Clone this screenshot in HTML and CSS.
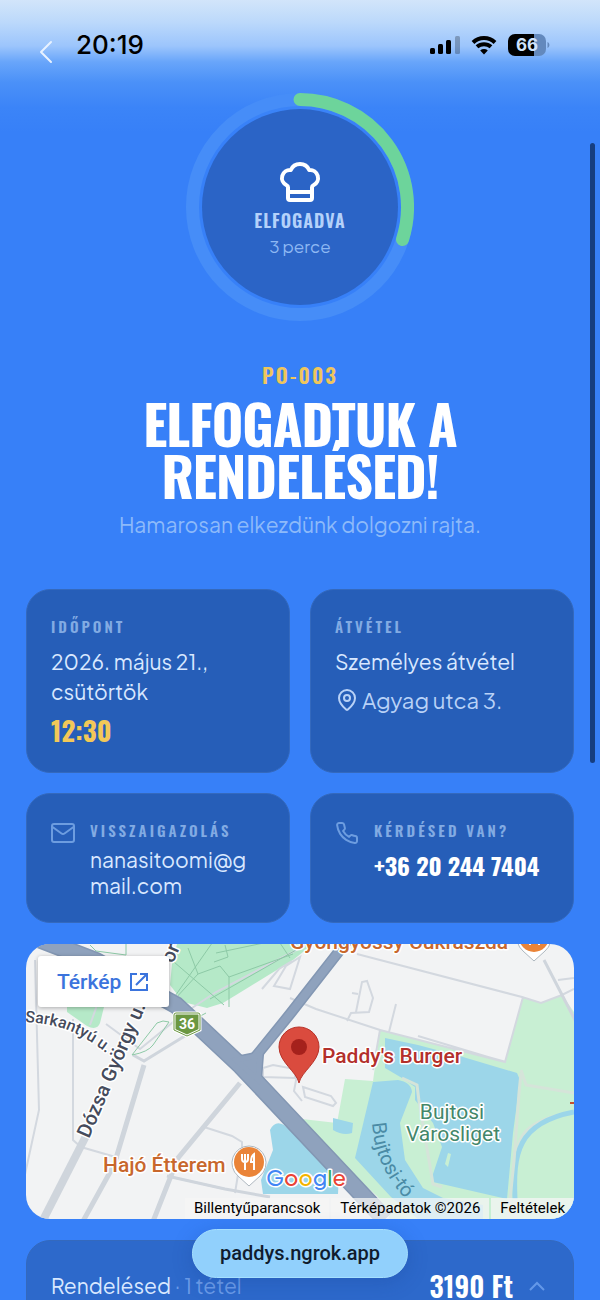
FILE: index.html
```html
<!DOCTYPE html>
<html lang="hu">
<head>
    <meta charset="UTF-8">
    <title>Paddy's Burger – PO-003</title>
    <meta name="viewport" content="width=device-width, initial-scale=1">
    <link rel="stylesheet" href="styles.css">
</head>
<body>
    <header class="status-bar">
        <button class="back" type="button" aria-label="Vissza">
            <svg width="14" height="24" viewBox="0 0 14 24"><path d="M12 2 2 12l10 10"/></svg>
        </button>
        <span class="clock">20:19</span>
        <div class="status-icons">
            <svg width="30" height="20" viewBox="0 0 30 20">
                <rect x="0" y="13" width="5" height="6" rx="1.5"/>
                <rect x="8" y="9" width="5" height="10" rx="1.5"/>
                <rect x="16" y="5" width="5" height="14" rx="1.5"/>
                <rect x="25" y="1" width="5" height="18" rx="1.5" opacity=".25"/>
            </svg>
            <svg class="wifi" width="26" height="20" viewBox="0 0 26 20">
                <path d="M2 7.5a16 16 0 0 1 22 0M6 11.8a10.5 10.5 0 0 1 14 0"/>
                <path class="dot" d="M13 19.5 9.2 15.6a5.6 5.6 0 0 1 7.6 0z"/>
            </svg>
            <svg width="42" height="22" viewBox="0 0 42 22">
                <path d="M26 0v22H7a7 7 0 0 1-7-7V7a7 7 0 0 1 7-7z"/>
                <path d="M26 0h5a7 7 0 0 1 7 7v8a7 7 0 0 1-7 7h-5z" fill="#6389bd"/>
                <path d="M39.500 8c2.500.8 2.500 5.200 0 6z" fill="#6389bd"/>
                <text class="battery-text" x="19" y="17" text-anchor="middle">66</text>
            </svg>
        </div>
    </header>

    <main class="page">
        <section class="progress">
            <svg class="ring" viewBox="0 0 228 228">
                <circle class="disc" cx="114" cy="114" r="98"/>
                <circle class="track" cx="114" cy="114" r="107.500"/>
                <path class="bar" d="M114 6.500A107.500 107.500 0 0 1 216.500 146.500"/>
            </svg>
            <div class="progress-text">
                <svg class="hat" width="48" height="48" viewBox="0 0 24 24">
                    <path d="M17 21a1 1 0 0 0 1-1v-5.350c0-.457.316-.844.727-1.041a4 4 0 0 0-2.134-7.589 5 5 0 0 0-9.186 0 4 4 0 0 0-2.134 7.588c.411.198.727.585.727 1.041V20a1 1 0 0 0 1 1ZM6 17h12"/>
                </svg>
                <strong>ELFOGADVA</strong>
                <span>3 perce</span>
            </div>
        </section>

        <section class="intro">
            <p class="order-no">PO-003</p>
            <h1>ELFOGADTUK A RENDELÉSED!</h1>
            <p class="lead">Hamarosan elkezdünk dolgozni rajta.</p>
        </section>

        <section class="cards">
            <div class="card">
                <h2>IDŐPONT</h2>
                <p>2026. május 21., csütörtök</p>
                <p class="time">12:30</p>
            </div>
            <div class="card">
                <h2>ÁTVÉTEL</h2>
                <p>Személyes átvétel</p>
                <p class="address">
                    <svg width="24" height="24" viewBox="0 0 24 24">
                        <path d="M20 10c0 5-5.500 10.200-7.400 11.800a1 1 0 0 1-1.200 0C9.500 20.200 4 15 4 10a8 8 0 0 1 16 0"/>
                        <circle cx="12" cy="10" r="3"/>
                    </svg>
                    Agyag utca 3.
                </p>
            </div>
            <div class="card with-icon">
                <svg width="24" height="24" viewBox="0 0 24 24">
                    <rect x="1" y="3" width="22" height="18" rx="2"/>
                    <path d="m1.500 6 9 6.500a2.600 2.600 0 0 0 3 0l9-6.500"/>
                </svg>
                <div>
                    <h2>VISSZAIGAZOLÁS</h2>
                    <p class="email">nanasitoomi@gmail.com</p>
                </div>
            </div>
            <div class="card with-icon">
                <svg width="24" height="24" viewBox="0 0 24 24">
                    <path d="M22 16.920v3a2 2 0 0 1-2.180 2 19.790 19.790 0 0 1-8.630-3.070 19.500 19.500 0 0 1-6-6 19.790 19.790 0 0 1-3.070-8.670A2 2 0 0 1 4.110 2h3a2 2 0 0 1 2 1.720 12.840 12.840 0 0 0 .7 2.810 2 2 0 0 1-.45 2.110L8.090 9.910a16 16 0 0 0 6 6l1.270-1.270a2 2 0 0 1 2.110-.45 12.840 12.840 0 0 0 2.810.7A2 2 0 0 1 22 16.920z"/>
                </svg>
                <div>
                    <h2>KÉRDÉSED VAN?</h2>
                    <a class="phone" href="tel:+36202447404">+36 20 244 7404</a>
                </div>
            </div>
        </section>

        <section class="map">
            <svg class="map-canvas" viewBox="0 0 548 275" preserveAspectRatio="xMidYMid slice">
                <rect width="548" height="275" fill="#f2f3f4"/>

                <!-- parks -->
                <g fill="#b5e9c8">
                    <path d="M151 0 146 20l-2 21 13 17 24 6 16-5 70-43 20-16z"/>
                    <path d="M41 55v13l20 14q10 5 13-3l4-16v-8z"/>
                </g>
                <path d="m354 86 125 32 18-65 19 6 20-8 12 17v207H364l-12-22-76-70v-8l35 4 8-44 28 2z" fill="#c8efd3"/>

                <!-- water -->
                <g fill="#9cd6e9">
                    <path d="m359 94 33 7 45 12 54 16q4 7 2 15l-6 45-6 66-74-17-1-5 10-30-9-24-18-23v-13l-13-9-17-10z"/>
                    <path d="m347 138 25-2q13 2 14 12l-12 31 5 37 18 28 20 10 40 7v14h-65l-27-22-36-39z"/>
                    <path d="m307 174 20 5-1 10q-9 3-19-3z"/>
                    <path d="M244 186q5-10 14-5l55 48-1 21h-75l-2-14 12-30z"/>
                </g>
                <path d="m376 134 15 7 2 16 14 83 9 3M489 275v-45c0-38 8-54 59-62" fill="none" stroke="#d5e4d9" stroke-width="3"/>
                <path d="M489 255c-2-45 2-76 59-87" fill="none" stroke="#9cd6e9" stroke-width="5"/>
                <path d="m495 129-2 20-5 68-6 58M495 126l5 15 48 8" fill="none" stroke="#d5e4d9" stroke-width="3"/>
                <path d="m422 209-3 11 3 3 3-13z" fill="#c8efd3"/>

                <!-- minor streets -->
                <g fill="none" stroke="#d3d8df" stroke-width="2">
                    <path d="M9 16 13 166-2 235M47 75v121l8 7 38 11M64 81l6-17 1-12M80 80l34 25 43-35 33-22 90-47"/>
                    <path d="M178 183l28 9 10 6v8l-7 43M141 232l58 13"/>
                    <path d="m331 10 165 43 19 6 21-8 12-6M264 54l26 11 64 21-7 40M370 60l-7 28M321 77l4-8 18-1 4-14-6-17-5 1-6 30M326 49l6 1M480 118l-18-5-70-21M354 86l125 32 18-65M532 36l16-2"/>
                    <path d="m272 126-4 21 8 10M277 143l28 9 5 7-3 3-28-9zM247 121l22 4v9l-32-1v-9zM236 45l17-20 13-8M248 42l12-20 14-9-10 32z"/>
                </g>
                <g fill="none" stroke="#cfd5dc">
                    <path d="M61 190 15 280" stroke-width="8"/>
                    <path d="m118 121-30 100-32 58M214 139l-62 75-26 66" stroke-width="5"/>
                    <path d="M107 111l11 6 62-38M141 232l58 13 45 8M518 16l32 62" stroke-width="3"/>
                </g>
                <g fill="none" stroke="#8dc9a6">
                    <path d="m64 1 6 6 30 4V0M148 18l50 43M147 55l44-63M184 55l86-49M162 4l10 26 22-8 9 11v30M172 30l-24 26M190 9l62-13 12 18M106 111l25-32 6-2 6 1-16 23q-5 7-21 10M180 69l-15 8"/>
                    <path d="m199 1 3 12-14 5M203 33l64-23"/>
                </g>

                <!-- main roads -->
                <g fill="none" stroke="#8397b3">
                    <path d="m5-8 65 25 80 44 65 61 144 153" stroke-width="18"/>
                    <path d="m325-8-61 78-43 53" stroke-width="11"/>
                    <path d="m210 116 24-5-2 25z" fill="#8397b3" stroke-width="8"/>
                </g>
                <g fill="none" stroke="#8fa2bd">
                    <path d="m5-8 65 25 80 44 65 61 144 153" stroke-width="15"/>
                    <path d="m325-8-61 78-43 53" stroke-width="8"/>
                    <path d="m210 116 24-5-2 25z" fill="#8fa2bd" stroke-width="5"/>
                </g>

                <!-- road shield -->
                <path d="M150 69h22q2 0 2 2v15l-13 6-13-6V71q0-2 2-2z" fill="#6b9741" stroke="#fff" stroke-width="3"/>
                <path d="M150 69h22q2 0 2 2v15l-13 6-13-6V71q0-2 2-2z" fill="none" stroke="#6b9741"/>
                <text class="shield" x="161" y="85" text-anchor="middle">36</text>

                <!-- street and place names -->
                <defs>
                    <path id="street-a" d="M-1 78C28 80 52 84 90 117"/>
                    <path id="street-b" d="M63 195 150-8"/>
                    <path id="street-c" d="M346 179C348 205 355 232 390 266"/>
                </defs>
                <text class="street"><textPath href="#street-a">Sarkantyú u.</textPath></text>
                <text class="street big"><textPath href="#street-b">Dózsa György u.</textPath></text>
                <text class="street big" transform="translate(147 20)rotate(-67)">or</text>
                <text class="water"><textPath href="#street-c">Bujtosi-tó</textPath></text>
                <text class="place park" x="426" y="175" text-anchor="middle">Bujtosi</text>
                <text class="place park" x="427" y="197" text-anchor="middle">Városliget</text>
                <text class="place food" x="264" y="5">Gyöngyössy Cukrászda</text>
                <text class="place food" x="77" y="228">Hajó Étterem</text>
                <text class="place main" x="296" y="119">Paddy's Burger</text>
                <path d="M544 159h5" stroke="#c5502f" stroke-width="2"/>

                <!-- restaurant pins -->
                <g id="pin-food">
                    <path d="M223 202a17 17 0 0 0-11 30l11 10 11-10a17 17 0 0 0-11-30z" fill="#fff" stroke="#aeb7bf" stroke-width="1"/>
                    <circle cx="223" cy="218" r="15" fill="#ea8438"/>
                    <path d="M216 210v5q0 3 3 3t3-3v-5M219 210v16M228 226v-16q-3 2-3 8h3" fill="none" stroke="#fff" stroke-width="2"/>
                </g>
                <use href="#pin-food" x="285" y="-225"/>
                <path d="M273 139c-2-11-20-21-20-36a20 20 0 0 1 40 0c0 15-18 25-20 36z" fill="#da4b3e" stroke="#b83228"/>
                <circle cx="273" cy="103" r="8" fill="#a5211c"/>

                <text class="google" x="240" y="242"><tspan fill="#4285f4">G</tspan><tspan fill="#ea4335">o</tspan><tspan fill="#f4b400">o</tspan><tspan fill="#4285f4">g</tspan><tspan fill="#34a853">l</tspan><tspan fill="#ea4335">e</tspan></text>
            </svg>
            <a class="map-open" href="#terkep">
                Térkép
                <svg width="20" height="20" viewBox="0 0 20 20"><path d="M8 2H2v16h16v-6M11 2h7v7M18 2 7 13"/></svg>
            </a>
            <div class="map-credits">
                <button type="button">Billentyűparancsok</button>
                <span>Térképadatok ©2026</span>
                <a href="#feltetelek">Feltételek</a>
            </div>
        </section>

        <section class="card order">
            <p>Rendelésed <span>· 1 tétel</span></p>
            <strong>3190 Ft</strong>
            <button type="button" aria-label="Részletek">
                <svg width="16" height="10" viewBox="0 0 16 10"><path d="m1 9 7-7 7 7"/></svg>
            </button>
        </section>
    </main>

    <div class="scroll-thumb"></div>
    <a class="url-pill" href="#top">paddys.ngrok.app</a>
</body>
</html>
```

FILE: styles.css
```css
* {
    box-sizing: border-box;
}
body {
    margin: 0;
    height: 100vh;
    overflow: hidden;
    position: relative;
    font-family: "Plus Jakarta Sans", Inter, "Noto Sans", sans-serif;
    color: #d9e8ff;
    background: linear-gradient(#d2e5fa 0, #bcd9fb 22px, #9cc5fc 46px, #68a5fa 62px, #4b91f8 82px, #3b84f8 108px, #3780f8 132px);
}
h1, h2, p {
    margin: 0;
}
svg {
    display: block;
    flex: none;
}
button {
    background: none;
    border: none;
    padding: 0;
    font: inherit;
    color: inherit;
    cursor: pointer;
}
a {
    color: inherit;
    text-decoration: none;
}
h1, h2, .progress-text strong, .order-no, .time, .phone, .order strong {
    font-family: Oswald, "Liberation Sans Narrow", "Liberation Sans", sans-serif;
}

/* status bar */
.status-bar {
    display: flex;
    align-items: center;
    height: 89px;
    padding: 0 50px 0 39px;
    font-family: Inter, sans-serif;
}
.back {
    margin-top: 14px;
}
.back path {
    fill: none;
    stroke: #e8f2ff;
    stroke-width: 2;
    stroke-linecap: round;
    stroke-linejoin: round;
}
.clock {
    margin-left: 23px;
    font-size: 26px;
    font-weight: 500;
    color: #000;
}
.status-icons {
    display: flex;
    align-items: center;
    gap: 11px;
    margin-left: auto;
}
.wifi path {
    fill: none;
    stroke: #000;
    stroke-width: 4;
}
.wifi .dot {
    fill: #000;
    stroke: none;
}
.battery-text {
    font-size: 17px;
    font-weight: 700;
    fill: #cfe3fc;
}

.page {
    padding: 4px 26px 0;
}

/* progress ring */
.progress {
    display: grid;
    justify-content: center;
    align-items: center;
}
.ring, .progress-text {
    grid-area: 1 / 1;
}
.ring {
    width: 228px;
}
.disc {
    fill: #2b64c6;
}
.track, .bar {
    fill: none;
    stroke: #468df8;
    stroke-width: 13;
}
.bar {
    stroke: #6dd49b;
    stroke-linecap: round;
}
.progress-text {
    display: flex;
    flex-direction: column;
    align-items: center;
    padding-top: 2px;
}
.hat path {
    fill: none;
    stroke: #fff;
    stroke-width: 2;
    stroke-linecap: round;
    stroke-linejoin: round;
}
.progress-text strong {
    font-size: 18px;
    font-weight: 600;
    line-height: 28px;
    letter-spacing: 1px;
    color: #b4d1fa;
}
.progress-text span {
    font-size: 17px;
    line-height: 24px;
    color: #8eb8f3;
}

/* heading */
.intro {
    padding: 37px 0 44px;
    text-align: center;
}
.order-no {
    font-size: 21px;
    font-weight: 600;
    line-height: 34px;
    letter-spacing: 2px;
    color: #efc65c;
}
h1 {
    max-width: 340px;
    margin: 5px auto 0;
    font-size: 54px;
    line-height: 52px;
    letter-spacing: -1px;
    color: #fff;
}
.lead {
    padding-top: 4px;
    font-size: 21px;
    line-height: 40px;
    color: #8dbafa;
}

/* info cards */
.cards {
    display: grid;
    grid-template-columns: 1fr 1fr;
    gap: 20px;
}
.card {
    min-width: 0;
    padding: 23px 24px;
    font-size: 21px;
    line-height: 30px;
    background: #265eb8;
    border: 1px solid #3469bd;
    border-radius: 24px;
}
.card h2 {
    margin-bottom: 8px;
    font-size: 15px;
    font-weight: 600;
    line-height: 26px;
    letter-spacing: 3px;
    white-space: nowrap;
    color: #82abe3;
}
.card .time {
    padding-top: 4px;
    font-size: 27px;
    font-weight: 700;
    line-height: 38px;
    color: #f2c858;
}
.address {
    display: flex;
    align-items: center;
    gap: 3px;
    padding-top: 8px;
    font-size: 22px;
    white-space: nowrap;
    color: #b9d2f7;
}
.address path, .address circle, .with-icon path, .with-icon rect {
    fill: none;
    stroke: currentColor;
    stroke-width: 2;
    stroke-linejoin: round;
}
.with-icon {
    display: flex;
    gap: 15px;
}
.with-icon > svg {
    margin-top: 4px;
    color: #6d9de0;
}
.with-icon > div {
    min-width: 0;
}
.with-icon h2 {
    margin-bottom: 4px;
}
.email {
    line-height: 26px;
    word-break: break-all;
}
.phone {
    font-size: 24px;
    font-weight: 700;
    line-height: 36px;
    white-space: nowrap;
    color: #fff;
}

/* map */
.map {
    position: relative;
    margin: 21px 0;
    overflow: hidden;
    border-radius: 24px;
    font-family: Roboto, sans-serif;
}
.map-canvas {
    width: 100%;
}
.map-canvas text {
    font-family: Roboto, sans-serif;
    paint-order: stroke;
    stroke: #fff;
    stroke-width: 3px;
    stroke-linejoin: round;
}
.map-canvas .shield {
    font-size: 14px;
    font-weight: 700;
    fill: #fff;
    stroke: none;
}
.street {
    font-size: 16px;
    font-weight: 500;
    fill: #454b5c;
}
.street.big {
    font-size: 20px;
}
.map-canvas .water {
    font-size: 20px;
    fill: #4a8ba5;
    stroke: none;
}
.place {
    font-size: 21px;
    font-weight: 500;
}
.park {
    font-weight: 400;
    fill: #43876a;
}
.food {
    fill: #c8672c;
}
.main {
    fill: #b3302b;
}
.map-canvas .google {
    font-family: "Plus Jakarta Sans", sans-serif;
    font-size: 22px;
    font-weight: 500;
}
.map-open {
    position: absolute;
    top: 12px;
    left: 12px;
    display: flex;
    align-items: center;
    gap: 8px;
    height: 51px;
    padding: 0 20px 0 19px;
    font-size: 21px;
    font-weight: 500;
    color: #3b74dd;
    background: #fff;
    border-radius: 3px;
    box-shadow: 0 1px 4px rgba(0, 0, 0, 0.3);
}
.map-open path {
    fill: none;
    stroke: currentColor;
    stroke-width: 2;
}
.map-credits {
    position: absolute;
    right: 0;
    bottom: 0;
    display: flex;
    gap: 2px;
    font-size: 15px;
    line-height: 21px;
    color: #000;
}
.map-credits > * {
    padding: 0 9px;
    background: rgba(245, 245, 245, 0.75);
}

/* order summary */
.order {
    display: flex;
    align-items: center;
    gap: 16px;
    padding: 24px 28px 40px 24px;
    background: #2d69cb;
}
.order p {
    margin-right: auto;
}
.order span {
    color: #6c9ce8;
}
.order strong {
    font-size: 28px;
    font-weight: 600;
    line-height: 42px;
    color: #fff;
}
.order path {
    fill: none;
    stroke: #6498e8;
    stroke-width: 2;
}

/* browser overlays */
.scroll-thumb {
    position: absolute;
    top: 11%;
    right: 5px;
    width: 5px;
    height: 620px;
    border-radius: 3px;
    background: #163e80;
}
.url-pill {
    position: absolute;
    left: 50%;
    bottom: 22px;
    transform: translateX(-50%);
    padding: 0 27px;
    font-family: Roboto, sans-serif;
    font-size: 20px;
    font-weight: 500;
    line-height: 47px;
    color: #101c2e;
    background: #91d0fc;
    border: 1px solid #a5e0ff;
    border-radius: 25px;
    box-shadow: 0 4px 20px rgba(20, 60, 140, 0.25);
}
```
